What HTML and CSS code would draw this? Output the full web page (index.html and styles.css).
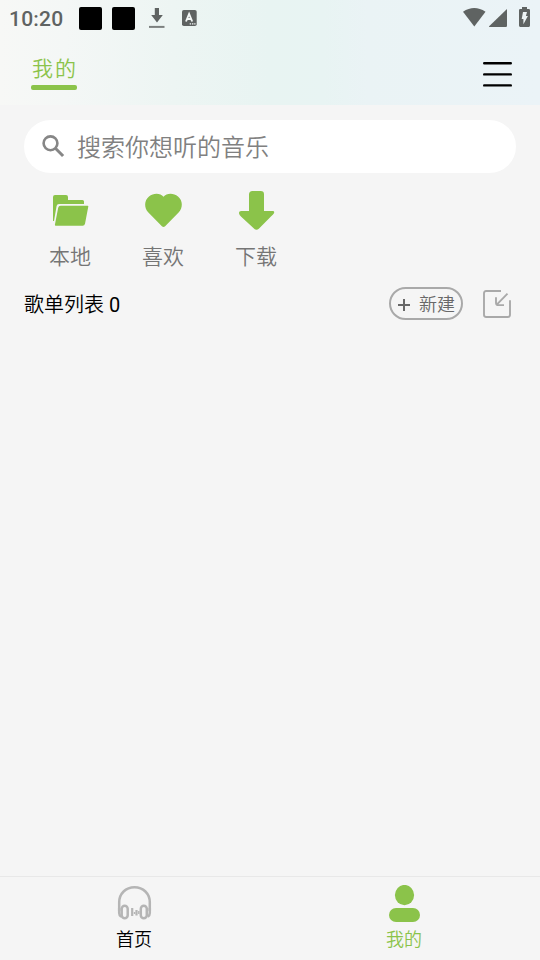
FILE: index.html
```html
<!DOCTYPE html>
<html lang="zh-CN">
<head>
<meta charset="utf-8">
<title>我的</title>
<link rel="stylesheet" href="styles.css">
</head>
<body>
<div class="app">
  <header class="top">
    <div class="status">
      <span class="clock">10:20</span>
      <i class="block"></i><i class="block"></i>
      <svg class="st-download" width="16" height="20" viewBox="0 0 16 20"><path d="M5.8 0h4.2v7h3.8L8 14.6 2.2 7h3.6z" fill="#5f6362"/><path d="M0 17.9h15.5v2H0z" fill="#7c807f"/></svg>
      <svg class="st-lang" width="15" height="16" viewBox="0 0 15 16"><rect width="14.7" height="16" rx="1.8" fill="#5f6362"/><path d="M4 11.5 7.1 3.9l3.1 7.6M5.2 9h3.9" fill="none" stroke="#f4f8f7" stroke-width="1.9"/><path d="M7.7 13.3h1.4v1.3H7.7zM10 13.3h1.4v1.3H10zM12.2 13.3h1.3v1.3h-1.3z" fill="#f4f8f7"/></svg>
      <svg class="st-wifi" width="23" height="19" viewBox="0 0 23 19"><path d="M0 3.8Q11.3-3.7 22.5 3.8L11.3 18.5z" fill="#5f6362"/></svg>
      <svg class="st-signal" width="18" height="18" viewBox="0 0 18 18"><path d="M18 0v16.8q0 1.2-1.2 1.2H.8q-1.3 0-.4-.9z" fill="#5f6362"/></svg>
      <svg class="st-battery" width="11" height="20" viewBox="0 0 11 20"><path d="M3 0h5v2h1.8Q11 2 11 3.3v15.3Q11 20 9.8 20H1.2Q0 20 0 18.6V3.3Q0 2 1.2 2H3z" fill="#5f6362"/><path d="M4 5h4L6.9 9h2L4.4 17.3V12H2.7z" fill="#edf4f5"/></svg>
    </div>
    <div class="titlebar">
      <h1 class="title">我的</h1>
      <svg class="menu" width="30" height="26" viewBox="0 0 30 26"><path d="M1.2 1.3h26.6M1.2 12.4h26.6M1.2 23.4h26.6" stroke="#000" stroke-width="2.4" stroke-linecap="round"/></svg>
    </div>
  </header>
  <main class="main">
    <div class="search">
      <svg width="23" height="23" viewBox="0 0 23 23"><circle cx="8.5" cy="8.3" r="6.9" fill="none" stroke="#868686" stroke-width="2.6"/><path d="m13.4 13.2 7.7 7.8" stroke="#868686" stroke-width="3"/></svg>
      <span>搜索你想听的音乐</span>
    </div>
    <nav class="actions">
      <div class="action">
        <svg width="40" height="42" viewBox="0 0 40 42"><path d="M3 31V7Q3 5 5 5h11q2 0 2 2v3h14.5q1.5 0 1.5 1.5V14H9q-2 0-2.4 2L4 31z" fill="#8bc34a"/><path d="M10.6 15.8h27.1q.8 0 .6.8L35 33.8q-.4 1.9-2.4 1.9H5.8q-1.1 0-.9-1L8.2 17.7q.4-1.9 2.4-1.9z" fill="#8bc34a"/></svg>
        <span>本地</span>
      </div>
      <div class="action">
        <svg width="40" height="42" viewBox="0 0 40 42"><path d="M20.5 6.8C23.5 3 30.5 2.7 35 6.5c5 4 5 11.5.6 16L22.1 36.3q-1.6 1.5-3.2 0L5.4 22.5C1 18 1 10.5 6 6.5c4.5-3.8 11.5-3.5 14.5.3z" fill="#8bc34a"/></svg>
        <span>喜欢</span>
      </div>
      <div class="action">
        <svg width="40" height="42" viewBox="0 0 40 42"><path d="M16.5 1h8.2Q28 1 28 4.3V21h8.8q2.2 0 1 2.6-.7 1.2-2.6 2.6L22.8 38.8q-2.3 2-4.6 0L5.2 26.8Q3.2 25 3 23.2 2.8 21 5.2 21H13V4.5Q13 1 16.5 1z" fill="#8bc34a"/></svg>
        <span>下载</span>
      </div>
    </nav>
    <section class="lists">
      <h2 class="lists-title">歌单列表 <span class="count">0</span></h2>
      <div class="new">
        <svg width="12" height="12" viewBox="0 0 12 12"><path d="M0 6h12M6 0v12" stroke="#686868" stroke-width="2"/></svg>
        <span>新建</span>
      </div>
      <svg class="import" width="28" height="28" viewBox="0 0 28 28" fill="none" stroke="#a9a9a9" stroke-width="1.9"><path d="M18 1H3.2Q1 1 1 3.2v21.6Q1 27 3.2 27h21.6q2.2 0 2.2-2.2V10.2"/><path d="M24.5 3.6 14 14.3M13 7.3v5.4q0 2.4 2.4 2.4H21"/></svg>
    </section>
  </main>
  <footer class="tabs">
    <div class="tab">
      <svg width="36" height="38" viewBox="0 0 36 38" fill="none" stroke="#b5b5b5" stroke-width="2.5"><path d="M3.2 26V17.3C3.2 8.6 9.8 2.2 18.5 2.2s15.3 6.4 15.3 15.1V26"/><rect x="5.7" y="20.7" width="6" height="12.6" rx="3"/><rect x="24.8" y="20.7" width="6" height="12.6" rx="3"/><path d="M3.2 23v5q0 2.5 2 3.8M33.8 23v5q0 2.5-2 3.8"/><path d="M16.2 23v8M20.5 25v5.5" stroke-width="2.2"/><path d="M18.5 27v2M22.8 26v3" stroke-width="1.4"/></svg>
      <span>首页</span>
    </div>
    <div class="tab tab-active">
      <svg width="36" height="38" viewBox="0 0 36 38" fill="#8bc34a"><ellipse cx="18.5" cy="10.1" rx="9.6" ry="10.2"/><rect x="3" y="23" width="31" height="14" rx="7"/></svg>
      <span>我的</span>
    </div>
  </footer>
</div>
</body>
</html>
```
FILE: styles.css
```css
* { box-sizing: border-box; }
body {
  margin: 0;
  background: #f5f5f5;
  font-family: Roboto, "Noto Sans CJK SC", sans-serif;
  font-weight: 350;
}
svg { display: block; flex: none; }
h1, h2 { margin: 0; font-weight: 350; }
.app { height: 960px; display: flex; flex-direction: column; }
.top {
  height: 105px;
  background: linear-gradient(90deg, #f7f8f6 0%, #f4f7f6 12%, #edf5f3 32%, #e8f4f2 50%, #e8f4f3 60%, #eaf3f5 68%, #ebf3f7 100%);
}
.status { height: 37px; padding: 0 10px 0 9px; display: flex; align-items: center; }
.clock { width: 70px; font-size: 21px; font-weight: 500; letter-spacing: .2px; color: #5f6362; }
.block { width: 23px; height: 23px; margin-right: 10px; border-radius: 2px; background: #000; }
.st-download { margin: -1px 17px 0 4px; }
.st-lang { margin: -1px auto 0 0; }
.st-wifi { margin: -2px 3px 0 0; }
.st-signal { margin: -1px 12px 0 0; }
.st-battery { margin-top: -3px; }
.titlebar { height: 68px; padding: 17px 27px 0 31px; display: flex; justify-content: space-between; }
.title {
  width: 46px;
  height: 36px;
  padding-left: 1px;
  color: #8bc34a;
  font-size: 21px;
  letter-spacing: 2px;
  line-height: 31px;
  white-space: nowrap;
}
.title::after {
  content: "";
  display: block;
  height: 5px;
  margin-left: -1px;
  border-radius: 2px;
  background: #8bc34a;
}
.menu { margin-top: 8px; }
.main { flex: 1; padding: 15px 24px 0; }
.search {
  height: 53px;
  padding-left: 18px;
  display: flex;
  align-items: center;
  gap: 12px;
  border-radius: 27px;
  background: #fff;
  color: #808080;
  font-size: 24px;
}
.search svg { margin-top: -1px; }
.search span { margin-top: -2px; }
.actions { display: flex; padding: 17px 0 0; margin-left: -1px; }
.action { width: 93px; display: flex; flex-direction: column; align-items: center; color: #757575; font-size: 21px; }
.action span { margin: 9px 0 0 1px; line-height: 32px; }
.lists { height: 34px; margin-top: 13px; display: flex; align-items: center; }
.lists-title { margin: 3px auto 0 0; color: #000; font-size: 20px; line-height: 30px; }
.count { font-weight: 400; }
.new {
  width: 74px;
  height: 33px;
  margin-right: 20px;
  padding-left: 7px;
  display: flex;
  align-items: center;
  gap: 9px;
  border: 2px solid #a9a9a9;
  border-radius: 17px;
  color: #686868;
  font-size: 18px;
  white-space: nowrap;
}
.new svg { margin-top: 3px; }
.import { margin: 1px 5px 0 0; }
.tabs { height: 84px; display: flex; border-top: 1px solid #e8e8e8; }
.tab { flex: 1; padding: 8px 2px 0 0; display: flex; flex-direction: column; align-items: center; color: #000; font-size: 18px; }
.tab span { margin-top: 3px; line-height: 28px; }
.tab-active { color: #8bc34a; }
```
